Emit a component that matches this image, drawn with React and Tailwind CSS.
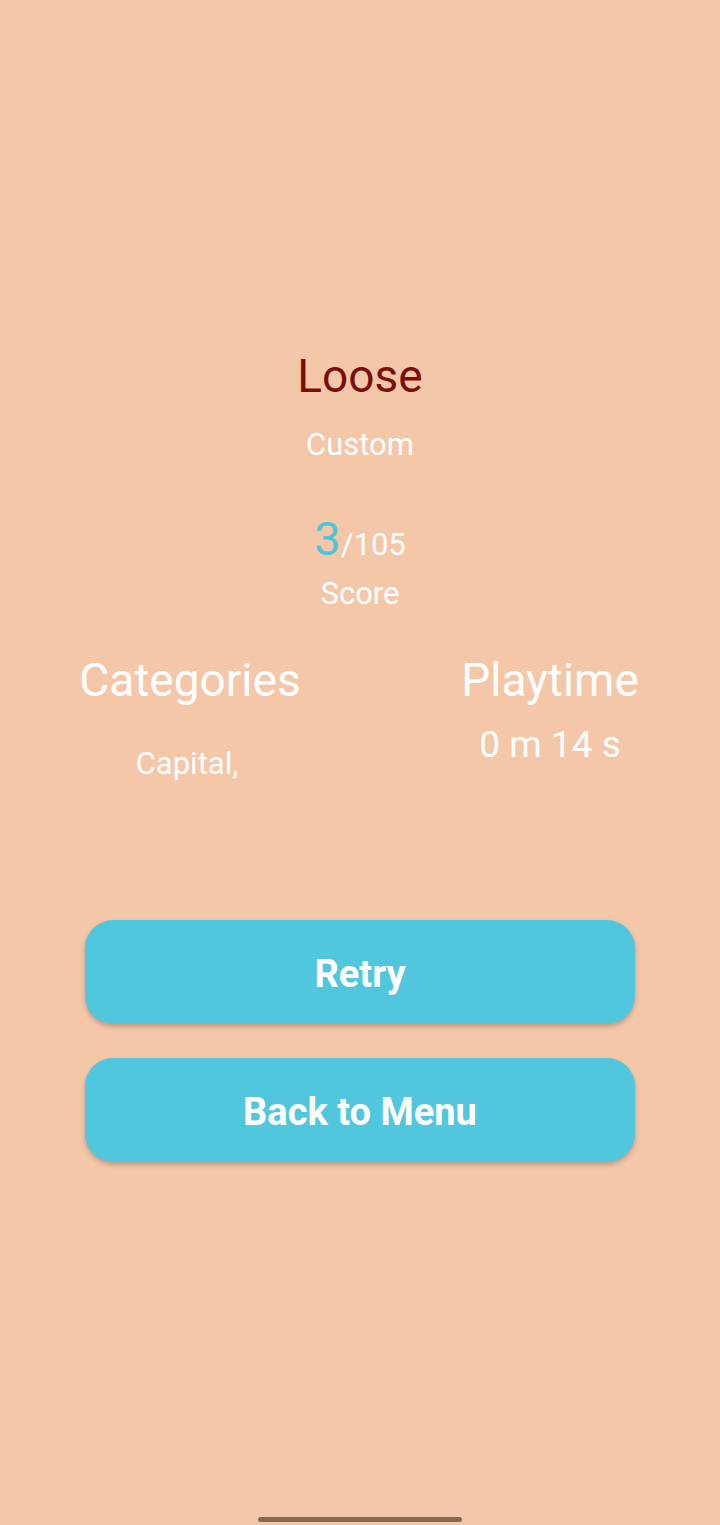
export default function App() {
  return (
    <div
      className="w-[720px] h-[1525px] bg-[#f5c7a9] flex flex-col items-center overflow-hidden"
      style={{ fontFamily: "Roboto, 'Liberation Sans', sans-serif" }}
    >
      <div className="mt-[353px] text-[46px] leading-none text-[#7b0e08]">Loose</div>
      <div className="mt-[30px] text-[31px] leading-none text-white">Custom</div>
      <div className="mt-[55px] leading-none text-white whitespace-nowrap">
        <span className="text-[47px] text-[#4fc3d8]">3</span>
        <span className="text-[31px]">/105</span>
      </div>
      <div className="mt-[16px] text-[31px] leading-none text-white">Score</div>

      <div className="mt-[48px] w-full pl-[40px] pr-[20px] grid grid-cols-2 gap-[60px] text-white">
        <div className="flex flex-col items-center">
          <div className="text-[46px] leading-none">Categories</div>
          <div className="mt-[45px] mr-[6px] text-[31px] leading-none">Capital,</div>
        </div>
        <div className="flex flex-col items-center">
          <div className="text-[46px] leading-none">Playtime</div>
          <div className="mt-[23px] text-[37px] leading-none">0 m 14 s</div>
        </div>
      </div>

      <div className="mt-[141px] w-[550px] flex flex-col gap-[34px]">
        <button className="h-[104px] w-full pt-[4px] rounded-[28px] bg-[#50c7dc] text-white text-[38px] font-bold shadow-[0_3px_5px_rgba(0,0,0,0.22)] flex items-center justify-center">
          Retry
        </button>
        <button className="h-[104px] w-full pt-[4px] rounded-[28px] bg-[#50c7dc] text-white text-[38px] font-bold shadow-[0_3px_5px_rgba(0,0,0,0.22)] flex items-center justify-center">
          Back to Menu
        </button>
      </div>

      <div className="mt-auto mb-[3px] w-[204px] h-[5px] rounded-full bg-[#85694f]" />
    </div>
  );
}
